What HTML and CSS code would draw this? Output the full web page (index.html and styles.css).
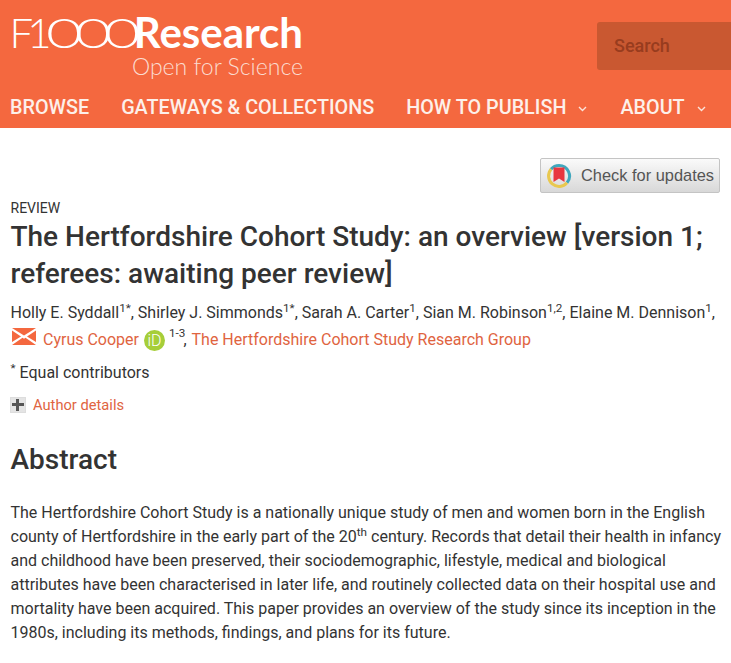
FILE: index.html
```html
<!DOCTYPE html>
<html lang="en">
<head>
    <meta charset="UTF-8">
    <meta name="viewport" content="width=device-width, initial-scale=1.0">
    <title>The Hertfordshire Cohort Study: an overview</title>
    <link rel="stylesheet" href="styles.css">
</head>
<body>
    <header class="site-header">
        <div class="header-top">
            <a class="logo" href="#">
                <span class="logo-name"><span class="logo-thin">F1<span class="logo-zeros">000</span></span><span class="logo-bold">Research</span></span>
                <span class="logo-tag">Open for Science</span>
            </a>
            <div class="search">Search</div>
        </div>
        <nav class="nav">
            <a href="#">BROWSE</a>
            <a href="#">GATEWAYS &amp; COLLECTIONS</a>
            <a href="#" class="has-menu">HOW TO PUBLISH
                <svg class="caret" viewBox="0 0 9 6" width="9" height="6"><path d="M1 1 4.500 4.500 8 1" fill="none" stroke="#fbe3da" stroke-width="1.400"/></svg>
            </a>
            <a href="#" class="has-menu">ABOUT
                <svg class="caret" viewBox="0 0 9 6" width="9" height="6"><path d="M1 1 4.500 4.500 8 1" fill="none" stroke="#fbe3da" stroke-width="1.400"/></svg>
            </a>
        </nav>
    </header>

    <main class="article">
        <div class="updates-row">
            <a class="updates" href="#">
                <svg viewBox="0 0 26 26" width="26" height="26">
                    <path d="M13 2.500A10.500 10.500 0 0 1 21 19.800" fill="none" stroke="#3fa7bd" stroke-width="3"/>
                    <path d="M13 2.500A10.500 10.500 0 0 0 5 6.200" fill="none" stroke="#3fa7bd" stroke-width="3"/>
                    <path d="M21 19.800A10.500 10.500 0 0 1 5 6.200" fill="none" stroke="#e9c84f" stroke-width="3"/>
                    <path d="M7.500 4.500h11v14.500L13 15.500 7.500 19z" fill="#e8363f"/>
                </svg>
                <span>Check for updates</span>
            </a>
        </div>

        <div class="article-type">REVIEW</div>
        <h1 class="title">The Hertfordshire Cohort Study: an overview [version 1; referees: awaiting peer review]</h1>

        <div class="authors">
            <p>Holly E. Syddall<sup>1*</sup>, Shirley J. Simmonds<sup>1*</sup>, Sarah A. Carter<sup>1</sup>, Sian M. Robinson<sup>1,2</sup>, Elaine M. Dennison<sup>1</sup>,</p>
            <p class="authors-second">
                <svg class="mail" viewBox="0 0 24 17" width="24" height="17">
                    <path d="M0 0h24L12 7.500z" fill="#f4683f"/>
                    <path d="M0 2.500 9 8.500 0 14zM24 2.500 15 8.500 24 14z" fill="#f4683f"/>
                    <path d="M0 17 10.500 9.800 12 10.800 13.500 9.800 24 17z" fill="#f4683f"/>
                </svg>
                <a href="#">Cyrus Cooper</a>
                <span class="orcid">iD</span>
                <sup>1-3</sup>, <a href="#">The Hertfordshire Cohort Study Research Group</a>
            </p>
        </div>

        <p class="equal"><sup>*</sup> Equal contributors</p>

        <div class="details">
            <span class="plus"></span>
            <a href="#">Author details</a>
        </div>

        <h2 class="abstract-head">Abstract</h2>
        <p class="abstract">The Hertfordshire Cohort Study is a nationally unique study of men and women born in the English county of Hertfordshire in the early part of the 20<sup>th</sup> century. Records that detail their health in infancy and childhood have been preserved, their sociodemographic, lifestyle, medical and biological attributes have been characterised in later life, and routinely collected data on their hospital use and mortality have been acquired. This paper provides an overview of the study since its inception in the 1980s, including its methods, findings, and plans for its future.</p>
    </main>
</body>
</html>
```

FILE: styles.css
```css
html, body {
    margin: 0;
    padding: 0;
}

body {
    font-family: Roboto, "Liberation Sans", sans-serif;
    background: #fff;
    color: #333;
    overflow: hidden;
}

a {
    text-decoration: none;
}

.site-header {
    background: #f4683f;
    height: 128px;
    overflow: hidden;
}

.header-top {
    display: flex;
    justify-content: space-between;
    height: 93px;
}

.logo {
    display: flex;
    flex-direction: column;
    align-items: flex-end;
    width: 291px;
    margin-left: 12px;
    padding-top: 9px;
    color: #fff;
}

.logo-name {
    font-family: Lato, sans-serif;
    font-size: 42px;
    line-height: 46px;
    white-space: nowrap;
}

.logo-thin {
    font-weight: 300;
    letter-spacing: -6px;
}

/* the logo's zeros are wide overlapping rings */
.logo-zeros {
    display: inline-block;
    margin-right: 30px;
    letter-spacing: -5px;
    transform: scaleX(1.5);
    transform-origin: left;
}

.logo-bold {
    font-weight: 700;
}

.logo-tag {
    font-family: Lato, sans-serif;
    font-size: 23px;
    font-weight: 300;
    line-height: 22px;
    color: #fbdcd0;
}

.search {
    width: 134px;
    height: 48px;
    margin-top: 22px;
    padding-left: 17px;
    box-sizing: border-box;
    background: #c95831;
    border-radius: 3px 0 0 3px;
    color: #983c1e;
    font-size: 18px;
    font-weight: 500;
    line-height: 48px;
}

.nav {
    display: flex;
    gap: 32px;
    padding-left: 10px;
    font-size: 19.8px;
    font-weight: 500;
    line-height: 29px;
}

.nav a {
    color: #fdf0ea;
    white-space: nowrap;
}

.has-menu {
    display: flex;
    align-items: center;
    gap: 12px;
}

.caret {
    margin: 3px 1px 0 0;
}

.article {
    padding: 30px 11px 0 10.5px;
}

.updates-row {
    display: flex;
    justify-content: flex-end;
}

.updates {
    display: flex;
    align-items: center;
    gap: 9px;
    box-sizing: border-box;
    width: 180px;
    height: 35px;
    margin-bottom: 1px;
    padding: 0 0 1px 5px;
    border: 1px solid #c4c4c4;
    border-radius: 2px;
    background: linear-gradient(#fafafa, #d8d8d8);
    color: #555;
    font-family: "Liberation Sans", sans-serif;
    font-size: 16.4px;
    white-space: nowrap;
}

.updates svg {
    margin-top: 2px;
}

.article-type {
    margin-top: 5px;
    font-size: 14px;
    line-height: 18px;
}

.title {
    margin: 1px 0 0;
    font-size: 28px;
    font-weight: 500;
    line-height: 37px;
}

.authors {
    margin-top: 7px;
    font-size: 16px;
    line-height: 28px;
}

.authors p {
    margin: 0;
    white-space: nowrap;
}

.authors a,
.details a {
    color: #e0643f;
}

sup {
    font-size: 11.7px;
    line-height: 0;
}

.authors-second {
    display: flex;
    align-items: center;
    gap: 5px;
    margin-top: -1px !important;
}

.authors-second sup {
    margin: 0 -7px 14px -1px;
}

.mail {
    margin: -7px 2px 0 1.5px;
}

.orcid {
    display: inline-block;
    width: 21px;
    height: 21px;
    border-radius: 50%;
    background: #a6ce39;
    color: #fff;
    font-size: 16px;
    font-weight: 300;
    line-height: 21px;
    text-align: center;
}

.equal {
    margin: 8px 0 0;
    font-size: 16px;
    line-height: 22px;
}

.details {
    display: flex;
    align-items: center;
    gap: 7px;
    margin-top: 11px;
    font-size: 14.7px;
    line-height: 20px;
}

.plus {
    position: relative;
    width: 16px;
    height: 16px;
    margin-left: -0.5px;
    background: #e4e4e4;
    border: 1px solid #ddd;
    box-sizing: border-box;
}

.plus::before,
.plus::after {
    content: "";
    position: absolute;
    background: #555;
}

.plus::before {
    left: 1px;
    right: 1px;
    top: 5px;
    height: 3px;
}

.plus::after {
    top: 1px;
    bottom: 1px;
    left: 5px;
    width: 3px;
}

.abstract-head {
    margin: 27px 0 0;
    font-size: 28px;
    font-weight: 500;
    line-height: 36px;
}

.abstract {
    margin: 23px -5px 0 0;
    font-size: 16px;
    line-height: 24px;
}
```
